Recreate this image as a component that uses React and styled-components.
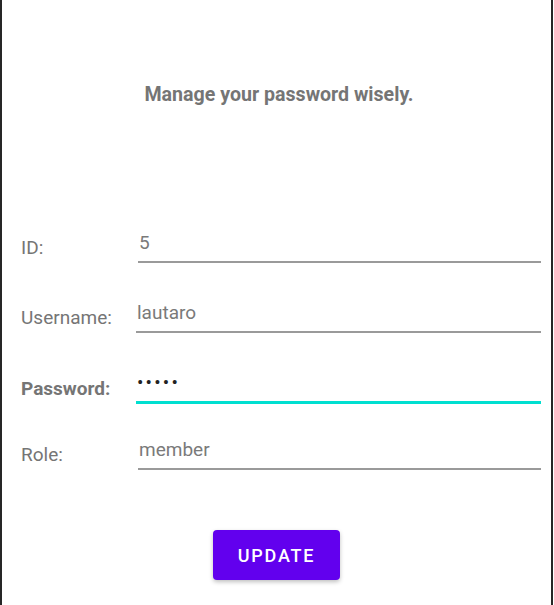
import styled, { createGlobalStyle } from "styled-components";

const GlobalStyle = createGlobalStyle`
  body {
    margin: 0;
    background: #ffffff;
    font-family: Roboto, "Noto Sans", sans-serif;
  }
`

const fields = [
  { label: "ID:", value: "5", inset: 2 },
  { label: "Username:", value: "lautaro" },
  { label: "Password:", value: "•••••", secret: true, focused: true },
  { label: "Role:", value: "member", inset: 2 },
]

function App() {
  return (
    <>
      <GlobalStyle />
      <Screen>
        <Title>Manage your password wisely.</Title>
        <Form>
          {fields.map((f) => (
            <Row key={f.label}>
              <Label $bold={f.focused}>{f.label}</Label>
              <Field $focused={f.focused} $secret={f.secret} $inset={f.inset || 0}>
                {f.value}
              </Field>
            </Row>
          ))}
        </Form>
        <Actions>
          <UpdateButton>Update</UpdateButton>
        </Actions>
      </Screen>
    </>
  );
}

export default App

const Screen = styled.div`
  width: 549px;
  height: 605px;
  border-left: 2px solid #262626;
  border-right: 2px solid #262626;
  background: #ffffff;
  box-sizing: content-box;
`

const Title = styled.h1`
  margin: 0;
  height: 194px;
  padding: 83px 0 0 5px;
  box-sizing: border-box;
  text-align: center;
  font-size: 19.6px;
  font-weight: 700;
  line-height: 24px;
  color: #757575;
`

const Form = styled.div`
  display: flex;
  flex-direction: column;
  padding: 0 10px 0 19px;
`

const Row = styled.div`
  display: flex;
  align-items: flex-end;
  height: 69px;
  &:nth-child(2) { height: 70px; }
  &:nth-child(3) { height: 71px; }
  &:nth-child(4) { height: 66px; }
`

const Label = styled.span`
  width: 115px;
  flex-shrink: 0;
  padding-bottom: 3px;
  font-size: 19px;
  line-height: 24px;
  font-weight: ${(p) => (p.$bold ? 700 : 400)};
  color: #757575;
`

const Field = styled.div`
  flex: 1;
  height: 38px;
  display: flex;
  align-items: center;
  margin-left: ${(p) => p.$inset}px;
  padding-left: 1px;
  font-size: 19px;
  letter-spacing: ${(p) => (p.$secret ? "2.2px" : "0")};
  color: ${(p) => (p.$secret ? "#222222" : "#7a7a7a")};
  border-bottom: ${(p) => (p.$focused ? "3px solid #00dfd0" : "2px solid #9a9a9a")};
`

const Actions = styled.div`
  display: flex;
  justify-content: center;
  padding-top: 60px;
`

const UpdateButton = styled.button`
  width: 127px;
  height: 50px;
  border: none;
  border-radius: 4px;
  background: #6200ee;
  color: #ffffff;
  font-family: Roboto, sans-serif;
  font-size: 18px;
  font-weight: 500;
  letter-spacing: 1.8px;
  text-transform: uppercase;
  box-shadow: 0 2px 4px rgba(0, 0, 0, 0.25);
`
